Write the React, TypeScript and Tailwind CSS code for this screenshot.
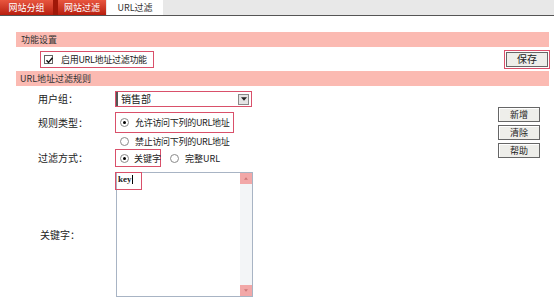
import React from "react";

const font = "font-['Noto_Sans_CJK_SC','Noto_Sans',sans-serif]";

function Radio({ on }: { on?: boolean }) {
  return (
    <span className="relative inline-block w-[9px] h-[9px] rounded-full border border-[#8a8a8a] bg-white shrink-0">
      {on && <span className="absolute left-[2px] top-[2px] w-[3px] h-[3px] rounded-full bg-black" />}
    </span>
  );
}

function Btn({ label }: { label: string }) {
  return (
    <div className="w-[42px] h-[15px] border border-[#666] bg-[#eeeeea] flex items-center justify-center text-[9px] text-[#222] shadow-[inset_1px_1px_0_#fff]">
      {label}
    </div>
  );
}

export default function App() {
  return (
    <div className={`w-[554px] h-[301px] bg-white text-[9px] text-[#222] ${font} leading-none`}>
      {/* tab bar */}
      <div className="h-[16px] flex bg-[#e8e8e8] border-b border-[#555]">
        <div className="flex bg-[#a01808]">
          <div className="w-[53px] flex items-center justify-center text-white bg-gradient-to-b from-[#e8553e] to-[#b81c0c]">网站分组</div>
          <div className="w-[48px] ml-[5px] flex items-center justify-center text-white bg-gradient-to-b from-[#e8553e] to-[#b81c0c]">网站过滤</div>
        </div>
        <div className="w-[56px] ml-[1px] flex items-center justify-center bg-white text-[#333]">URL过滤</div>
      </div>

      <div className="pl-[16px] pr-[5px] pt-[16px]">
        <div className="h-[15px] bg-[#fbbab2] flex items-center pl-[5px] text-[#333]">功能设置</div>

        <div className="h-[24px] flex items-center">
          <div className="ml-[24px] h-[17px] w-[114px] border-[1.5px] border-[#d9506a] flex items-center pl-[3px] gap-[8px]">
            <span className="relative w-[9px] h-[9px] border border-[#666] bg-white shrink-0">
              <svg viewBox="0 0 9 9" className="absolute inset-0 w-[9px] h-[9px]">
                <path d="M1.5 4.2 L3.5 6.4 L7.5 1.8" stroke="#111" strokeWidth="1.4" fill="none" />
              </svg>
            </span>
            <span className="whitespace-nowrap tracking-[-0.3px]">启用URL地址过滤功能</span>
          </div>
          <div className="ml-auto mr-[-1px] border-[1.5px] border-[#d9506a] p-[1px]">
            <div className="w-[42px] h-[15px] border border-[#666] bg-[#eeeeea] flex items-center justify-center text-[10px]">保存</div>
          </div>
        </div>

        <div className="h-[15px] bg-[#fbbab2] flex items-center pl-[4px] text-[#333]">URL地址过滤规则</div>

        <div className="flex">
          <div className="flex-1">
            {/* user group */}
            <div className="flex items-center mt-[5px] h-[16px]">
              <div className="w-[99px] pl-[22px] text-[10px]">用户组：</div>
              <div className="w-[137px] h-[16px] border-[1.5px] border-[#d9506a] flex items-center bg-white">
                <div className="flex-1 h-full border-l-2 border-[#555] flex items-center pl-[3px] text-[10px]">销售部</div>
                <div className="w-[11px] h-[11px] mr-[2px] border border-[#888] bg-[#e4e4e4] flex items-center justify-center">
                  <svg viewBox="0 0 7 4" className="w-[6px] h-[4px]"><path d="M0 0 H7 L3.5 4 Z" fill="#222" /></svg>
                </div>
              </div>
            </div>

            {/* rule type */}
            <div className="flex items-center mt-[5px] h-[21px]">
              <div className="w-[99px] pl-[22px] text-[10px]">规则类型：</div>
              <div className="w-[119px] h-[21px] border-[1.5px] border-[#d9506a] flex items-center pl-[4px] gap-[6px]">
                <Radio on />
                <span className="whitespace-nowrap tracking-[-0.3px]">允许访问下列的URL地址</span>
              </div>
            </div>
            <div className="flex items-center h-[16px]">
              <div className="w-[99px]" />
              <div className="flex items-center pl-[5px] gap-[6px]">
                <Radio />
                <span className="whitespace-nowrap tracking-[-0.3px]">禁止访问下列的URL地址</span>
              </div>
            </div>

            {/* filter mode */}
            <div className="flex items-center h-[18px]">
              <div className="w-[99px] pl-[22px] text-[10px]">过滤方式：</div>
              <div className="w-[46px] h-[18px] border-[1.5px] border-[#d9506a] flex items-center pl-[4px] gap-[5px]">
                <Radio on />
                <span className="whitespace-nowrap">关键字</span>
              </div>
              <div className="flex items-center ml-[9px] gap-[6px]">
                <Radio />
                <span className="whitespace-nowrap">完整URL</span>
              </div>
            </div>

            {/* keywords */}
            <div className="flex items-center mt-[5px]">
              <div className="w-[100px] pl-[24px] text-[10px]">关键字：</div>
              <div className="relative w-[137px] h-[125px] border border-[#a8b4c4] bg-white flex">
                <div className="flex-1" />
                <div className="w-[12px] bg-[#f3f5f7] flex flex-col justify-between">
                  <div className="h-[11px] bg-[#f2a8a8] flex items-center justify-center">
                    <svg viewBox="0 0 5 3" className="w-[4px] h-[3px]"><path d="M0 3 L2.5 0 L5 3 Z" fill="#c77" /></svg>
                  </div>
                  <div className="h-[11px] bg-[#f2a8a8] flex items-center justify-center">
                    <svg viewBox="0 0 5 3" className="w-[4px] h-[3px]"><path d="M0 0 L2.5 3 L5 0 Z" fill="#c77" /></svg>
                  </div>
                </div>
                <div className="absolute left-[-2px] top-[-1px] w-[27px] h-[18px] border-[1.5px] border-[#d9506a] pl-[2px] pt-[2px] text-[9px] font-bold font-['Liberation_Serif',serif]">
                  key<span className="inline-block w-px h-[9px] bg-black align-middle" />
                </div>
              </div>
            </div>
          </div>

          {/* side buttons */}
          <div className="w-[51px] pt-[21px] flex flex-col gap-[3px]">
            <Btn label="新增" />
            <Btn label="清除" />
            <Btn label="帮助" />
          </div>
        </div>
      </div>
    </div>
  );
}
